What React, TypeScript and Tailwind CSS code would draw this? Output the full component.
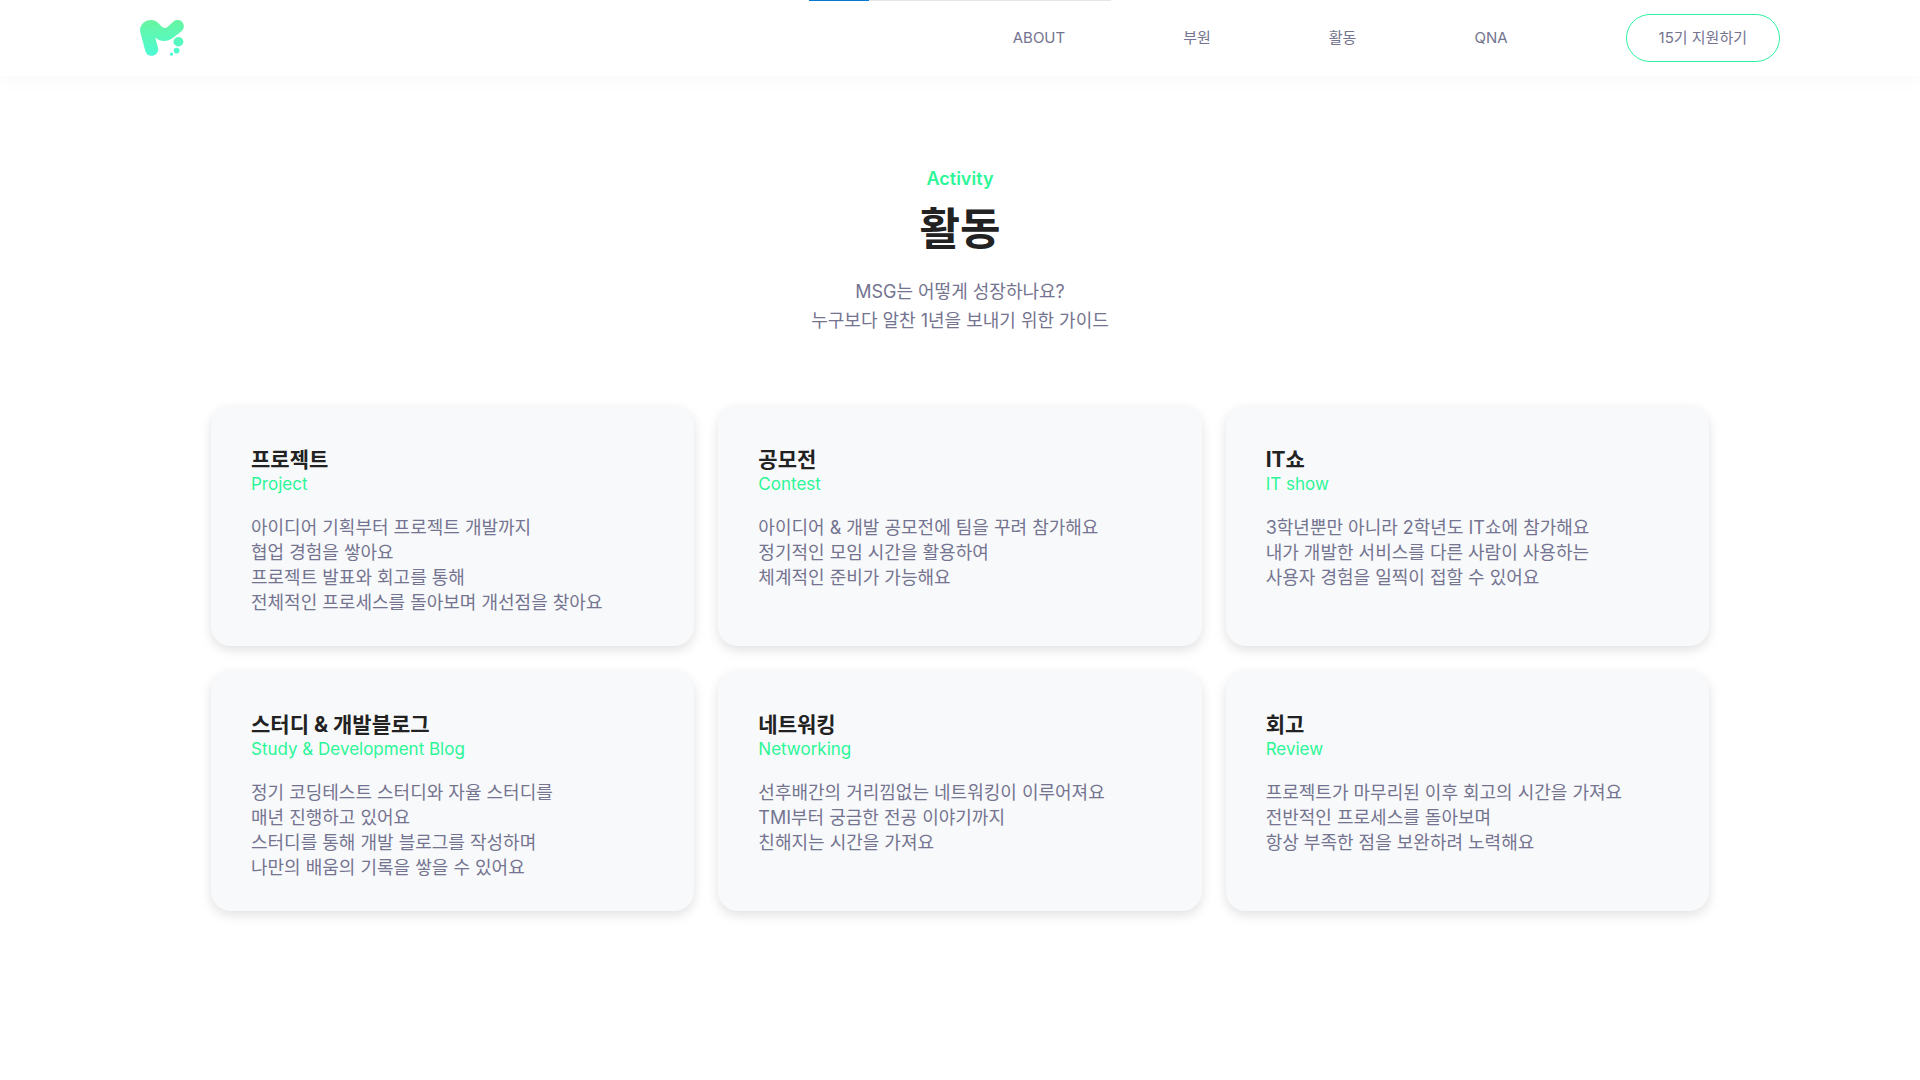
const navItems = [
  { label: 'ABOUT', href: '#about' },
  { label: '부원', href: '#members' },
  { label: '활동', href: '#activity' },
  { label: 'QNA', href: '#qna' },
];

const activities = [
  {
    title: '프로젝트',
    subtitle: 'Project',
    lines: [
      '아이디어 기획부터 프로젝트 개발까지',
      '협업 경험을 쌓아요',
      '프로젝트 발표와 회고를 통해',
      '전체적인 프로세스를 돌아보며 개선점을 찾아요',
    ],
  },
  {
    title: '공모전',
    subtitle: 'Contest',
    lines: ['아이디어 & 개발 공모전에 팀을 꾸려 참가해요', '정기적인 모임 시간을 활용하여', '체계적인 준비가 가능해요'],
  },
  {
    title: 'IT쇼',
    subtitle: 'IT show',
    lines: ['3학년뿐만 아니라 2학년도 IT쇼에 참가해요', '내가 개발한 서비스를 다른 사람이 사용하는', '사용자 경험을 일찍이 접할 수 있어요'],
  },
  {
    title: '스터디 & 개발블로그',
    subtitle: 'Study & Development Blog',
    lines: [
      '정기 코딩테스트 스터디와 자율 스터디를',
      '매년 진행하고 있어요',
      '스터디를 통해 개발 블로그를 작성하며',
      '나만의 배움의 기록을 쌓을 수 있어요',
    ],
  },
  {
    title: '네트워킹',
    subtitle: 'Networking',
    lines: ['선후배간의 거리낌없는 네트워킹이 이루어져요', 'TMI부터 궁금한 전공 이야기까지', '친해지는 시간을 가져요'],
  },
  {
    title: '회고',
    subtitle: 'Review',
    lines: ['프로젝트가 마무리된 이후 회고의 시간을 가져요', '전반적인 프로세스를 돌아보며', '항상 부족한 점을 보완하려 노력해요'],
  },
];

function Logo() {
  return (
    <svg width="44" height="36" viewBox="0 0 44 36" fill="none" aria-hidden="true">
      <defs>
        <linearGradient id="logo-fill" x1="0" y1="0" x2="0" y2="36" gradientUnits="userSpaceOnUse">
          <stop stopColor="#67F5A0" />
          <stop offset="1" stopColor="#4DFBD4" />
        </linearGradient>
      </defs>
      <path
        d="M11 0C14.500 0 17 1.500 19 3.800C20.800 6 22.500 8 25 8C26.500 8 27.500 7 28.500 6L33.500 1.500C36 -0.500 40 -0.500 42.200 2C44.500 4.700 44.300 8.500 41.700 10.900L33.500 17.600C28 22 20.500 22.400 15.200 17.500L18 27.600C18.900 31.400 16.600 34.900 12.900 35.700C9.200 36.500 6 34.300 5.200 30.700L0.400 12.500C-1.200 5.800 4 0 11 0Z"
        fill="url(#logo-fill)"
      />
      <ellipse cx="38.400" cy="21.800" rx="5" ry="4.700" fill="url(#logo-fill)" />
      <circle cx="36.600" cy="30.600" r="2.900" fill="url(#logo-fill)" />
      <circle cx="31.500" cy="34.200" r="1.600" fill="url(#logo-fill)" />
    </svg>
  );
}

export default function App() {
  return (
    <div className="min-h-screen bg-white font-['Inter','Noto_Sans_CJK_KR',sans-serif] text-[#747490]">
      <div className="fixed top-0 left-1/2 z-20 h-px w-[302px] -translate-x-1/2 bg-[#e5e5e5]">
        <div className="h-full w-1/5 bg-[#0078d4]" />
      </div>

      <header className="bg-white px-4 shadow-[0_4px_20px_rgba(0,0,0,0.03)]">
        <div className="mx-auto flex h-[76px] max-w-[1640px] items-center justify-between">
          <a href="#home" aria-label="MSG">
            <Logo />
          </a>
          <nav className="flex items-center gap-[118px] text-[15px]">
            {navItems.map((item) => (
              <a key={item.label} href={item.href}>
                {item.label}
              </a>
            ))}
            <button type="button" className="h-12 rounded-3xl border border-[#2df3a0] px-8">
              15기 지원하기
            </button>
          </nav>
        </div>
      </header>

      <main className="mx-auto max-w-[1530px] px-4 pt-[89px] pb-16">
        <div className="text-center">
          <p className="text-lg font-semibold text-[#2cf697]">Activity</p>
          <h1 className="mt-[6px] text-[44px] leading-[60px] font-bold text-[#222222]">활동</h1>
          <p className="mt-[18px] text-lg leading-[29px]">
            MSG는 어떻게 성장하나요?
            <br />
            누구보다 알찬 1년을 보내기 위한 가이드
          </p>
        </div>

        <div className="mt-[71px] grid grid-cols-3 gap-x-6 gap-y-[25px]">
          {activities.map((activity) => (
            <article
              key={activity.title}
              className="min-h-[240px] rounded-[20px] bg-[#f8f9fb] px-10 pt-[41px] pb-6 shadow-[0_4px_12px_rgba(0,0,0,0.12)]"
            >
              <h2 className="text-[21px] leading-[25px] font-bold text-[#222222]">{activity.title}</h2>
              <p className="text-[17px] leading-[25px] text-[#2cf697]">{activity.subtitle}</p>
              <p className="mt-[18px] text-lg leading-[25px]">
                {activity.lines.map((line) => (
                  <span key={line} className="block">
                    {line}
                  </span>
                ))}
              </p>
            </article>
          ))}
        </div>
      </main>
    </div>
  );
}
